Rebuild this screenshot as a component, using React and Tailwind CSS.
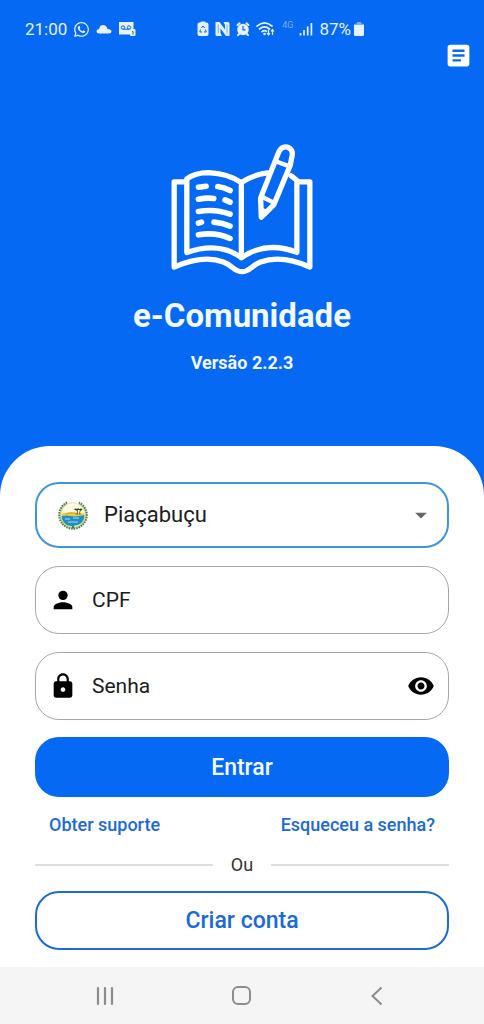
import { useState } from 'react';
import { FaWhatsapp } from 'react-icons/fa';
import { MdArrowDropDown, MdArticle, MdLock, MdVisibility, MdVisibilityOff } from 'react-icons/md';

function PersonIcon() {
  return (
    <svg width="28" height="28" viewBox="0 0 24 24" fill="currentColor" aria-hidden="true">
      <circle cx="12" cy="8" r="4" />
      <path d="M12 14c-2.670 0-8 1.340-8 4v2h16v-2c0-2.660-5.330-4-8-4z" />
    </svg>
  );
}

function CloudIcon() {
  return (
    <svg width="16" height="16" viewBox="0 0 16 16" aria-hidden="true">
      <path d="M3 12.500Q.5 12.500.5 10.300T3 8.300Q3.600 4 7 4t4.500 4q4 .2 4 2.400 0 2.100-2.500 2.100z" fill="#e6f2ff" />
    </svg>
  );
}

function VoicemailIcon() {
  return (
    <svg width="18" height="16" viewBox="0 0 18 16" aria-hidden="true">
      <path d="M1 1h14.500v7h-3.500v5.500H1z" fill="#e6f2ff" />
      <g fill="none" stroke="#0569f4" strokeWidth="1">
        <circle cx="5" cy="6.500" r="1.700" />
        <circle cx="11" cy="6.500" r="1.700" />
        <path d="M5 8.200h6" />
      </g>
      <rect x="12" y="8" width="5.500" height="7" rx="1" fill="#e6f2ff" />
      <path d="M14 10.500h1v3" fill="none" stroke="#0569f4" strokeWidth="1" />
    </svg>
  );
}

function BatteryCareIcon() {
  return (
    <svg width="12" height="16" viewBox="0 0 12 16" aria-hidden="true">
      <path d="M3.500 1.500q0-1 1-1h3q1 0 1 1h1q2 0 2 2v9.500q0 2-2 2h-7q-2 0-2-2V3.500q0-2 2-2z" fill="#e6f2ff" />
      <path d="M4.300 7 6 5l1.700 2M8.500 8.500l.7 2.500H7M5 11H2.800L3.500 8.500" fill="none" stroke="#0569f4" strokeWidth="1" />
    </svg>
  );
}

function NfcIcon() {
  return (
    <svg width="15" height="16" viewBox="0 0 15 16" aria-hidden="true">
      <path d="M1 1h3.500l5.500 7.500V4L8.500 1H13q1.500 0 1.500 1.500V15h-3.500L5.500 7.500V12L7 15H2Q.5 15 .5 13.500V1z" fill="#e6f2ff" />
      <path d="M3.300 3.500v9M12 3.500v9" stroke="#0569f4" strokeWidth=".5" />
    </svg>
  );
}

function AlarmIcon() {
  return (
    <svg width="14" height="16" viewBox="0 0 14 16" aria-hidden="true">
      <circle cx="7" cy="8.500" r="5.800" fill="#e6f2ff" />
      <path d="M1.500 4 3.600 2.300M12.500 4 10.400 2.300M3 13l-1 1.200M11 13l1 1.200" stroke="#e6f2ff" strokeWidth="2" strokeLinecap="round" />
      <path d="M7 5v3.800h2.600" fill="none" stroke="#0569f4" strokeWidth="1.200" />
    </svg>
  );
}

function WifiIcon() {
  return (
    <svg width="20" height="16" viewBox="0 0 20 16" aria-hidden="true">
      <g fill="none" stroke="#e6f2ff" strokeWidth="1.700" strokeLinecap="round">
        <path d="M1 5.200Q8.500-1.500 16 5.200" />
        <path d="M3.500 8Q8.500 3.600 13.500 8" />
        <path d="M6 10.700q2.500-2 4.500-.4" />
      </g>
      <circle cx="8.500" cy="13" r="1.300" fill="#e6f2ff" />
      <path d="M12.500 8.500v5M11 12l1.500 2 1.500-2M16.500 14V9M15 10.500l1.500-2 1.500 2" fill="none" stroke="#e6f2ff" strokeWidth="1.200" />
    </svg>
  );
}

function SignalIcon() {
  return (
    <svg width="14" height="16" viewBox="0 0 14 16" aria-hidden="true">
      <path d="M1.500 12v2.500M5 9v5.500M8.700 5.500v9M12.400 2v12.500" stroke="#e6f2ff" strokeWidth="1.700" />
    </svg>
  );
}

function BatteryIcon() {
  return (
    <svg width="10" height="16" viewBox="0 0 10 16" aria-hidden="true">
      <path d="M3 1h4v1.500h1.500Q10 2.500 10 4H0q0-1.500 1.500-1.500H3z" fill="#78aff8" />
      <path d="M0 4h10v9.500q0 1.500-1.500 1.500h-7Q0 15 0 13.500z" fill="#e6f2ff" />
    </svg>
  );
}

function StatusBar() {
  return (
    <div className="flex h-[39px] items-end justify-between pr-[120px] pl-[25px] text-[#e6f2ff]">
      <div className="flex h-5 items-center gap-[6px]">
        <span className="text-[17px] leading-5">21:00</span>
        <FaWhatsapp size={17} />
        <CloudIcon />
        <VoicemailIcon />
      </div>
      <div className="flex h-5 items-center gap-[6px]">
        <BatteryCareIcon />
        <NfcIcon />
        <AlarmIcon />
        <WifiIcon />
        <span className="self-start text-[9px] leading-3 text-[#78aff8]">4G</span>
        <SignalIcon />
        <span className="flex items-center gap-[3px] text-[17px] leading-5">
          87%
          <BatteryIcon />
        </span>
      </div>
    </div>
  );
}

function BookLogo() {
  return (
    <svg width="145" height="133" viewBox="30 25 435 400" fill="none" stroke="#fff" strokeWidth="16" strokeLinecap="round" strokeLinejoin="round" aria-hidden="true">
      <path d="M78 142H42V398Q130 360 190 383C218 393 222 412 246 412S274 393 302 383Q365 360 450 398V142H413" />
      <path d="M244 370Q178 320 80 354V133Q105 114 145 114 205 117 244 144 278 121 322 115M244 147V370Q320 318 411 354V137L394 124" />
      <path d="M115 158 138 155M173 156Q192 158 210 168M115 194Q140 189 161 192M195 196 210 203M115 231Q165 222 210 239M115 266 124 263M162 263Q188 265 210 275M115 301Q168 292 210 312" strokeWidth="17" />
      <path d="M357 51Q366 34 382 37 400 44 397 62L391 92 342 210 304 248 302 190z" />
      <path d="M347 80 391 96M304 186 343 205" strokeWidth="13" />
      <path d="M304 222V248L324 228z" fill="#fff" strokeWidth="4" />
    </svg>
  );
}

function CitySeal() {
  return (
    <svg width="32" height="32" viewBox="0 0 32 32" aria-hidden="true">
      <circle cx="16" cy="16" r="12" fill="#fbfae5" />
      <path d="M4.500 14.500q11-2 23 0v3h-23z" fill="#f2ce3c" />
      <path d="M4.500 17q5-1 10 0t13-1q0 10-11.500 11T4.500 17z" fill="#218fc4" />
      <path d="M8 20h5m3-1h6M11 23h10" stroke="#a4dff1" strokeWidth="1" />
      <path d="M9 15q5-2 12 0" stroke="#dca829" strokeWidth="1.500" fill="none" />
      <path d="M20 16q1-3 0-6m3 6q-1-3 .5-5" stroke="#69522a" strokeWidth=".9" fill="none" />
      <path d="M17 10.500q1.500-2 3-.3 1-2 2.500 0 2-1.500 3 .8l-2 .5-2-.7-1.500 1z" fill="#24402b" />
      <path d="M10.500 4.500A12.700 12.700 0 1 0 21.500 4.500" fill="none" stroke="#cfdc8a" strokeWidth="2" />
      <path d="M10 3.500A13.800 13.800 0 1 0 22 3.500" fill="none" stroke="#4b7453" strokeWidth="2" strokeDasharray="1.500 1" />
      <path d="m14.500 28 1.500-2 1.500 2-1.500 2z" fill="#398449" />
      <path d="M12 4.500q4-2 8 0" stroke="#dfe6a8" fill="none" strokeWidth="1" />
    </svg>
  );
}

const fieldClass =
  'flex h-[68px] items-center rounded-3xl border border-[#a6a6a6] px-[13px] text-black focus-within:border-[#2f8fdc]';
const inputClass =
  'min-w-0 flex-1 bg-transparent pl-[15px] text-[21px] leading-7 text-[#1c1c1c] outline-none placeholder:text-[#1c1c1c] placeholder:opacity-100';

function LoginForm() {
  const [visible, setVisible] = useState(false);

  return (
    <form className="flex flex-1 flex-col px-[35px] pt-9 pb-[17px]" onSubmit={(e) => e.preventDefault()}>
      <div className="flex h-[66px] items-center rounded-3xl border-2 border-[#3d96dc] pl-5">
        <CitySeal />
        <div className="grid h-full min-w-0 flex-1 items-center">
          <select
            aria-label="Município"
            className="col-start-1 row-start-1 h-full w-full appearance-none bg-transparent pb-[2px] pl-[15px] text-[22px] text-[#1c1c1c] outline-none"
          >
            <option>Piaçabuçu</option>
          </select>
          <MdArrowDropDown size={28} className="pointer-events-none col-start-1 row-start-1 mr-3 justify-self-end text-[#666]" />
        </div>
      </div>

      <div className={`${fieldClass} mt-[18px]`}>
        <PersonIcon />
        <input aria-label="CPF" placeholder="CPF" inputMode="numeric" className={inputClass} />
      </div>

      <div className={`${fieldClass} mt-[18px]`}>
        <MdLock size={28} />
        <input aria-label="Senha" placeholder="Senha" type={visible ? 'text' : 'password'} className={inputClass} />
        <button type="button" aria-label="Mostrar senha" onClick={() => setVisible(!visible)}>
          {visible ? <MdVisibilityOff size={28} /> : <MdVisibility size={28} />}
        </button>
      </div>

      <button type="submit" className="mt-[17px] h-[60px] rounded-3xl bg-[#0569f4] pt-[2px] text-[23px] font-medium text-[#f2f8ff]">
        Entrar
      </button>

      <div className="mt-4 flex justify-between px-[14px] text-[18px] leading-6 font-medium text-[#1b6ad6]">
        <a href="#suporte">Obter suporte</a>
        <a href="#senha">Esqueceu a senha?</a>
      </div>

      <div className="mt-4 flex items-center gap-[18px] text-[18px] leading-6 text-[#333]">
        <span className="h-[2px] flex-1 bg-[#dedede]" />
        Ou
        <span className="h-[2px] flex-1 bg-[#dedede]" />
      </div>

      <button type="button" className="mt-[14px] h-[59px] rounded-3xl border-2 border-[#1b6ad6] pt-[2px] text-[23px] font-medium text-[#1b6ad6]">
        Criar conta
      </button>
    </form>
  );
}

function NavigationBar() {
  return (
    <nav className="grid h-[57px] grid-cols-3 items-center bg-[#f5f5f5] px-9 text-[#8c8c8c]">
      <button type="button" aria-label="Recentes" className="justify-self-center">
        <svg width="20" height="20" viewBox="0 0 20 20" stroke="currentColor" strokeWidth="2.200" strokeLinecap="round">
          <path d="M3 2v16M10 2v16M17 2v16" />
        </svg>
      </button>
      <button type="button" aria-label="Início" className="justify-self-center">
        <svg width="20" height="20" viewBox="0 0 20 20" fill="none" stroke="currentColor" strokeWidth="2">
          <rect x="1" y="1" width="17" height="17" rx="5" />
        </svg>
      </button>
      <button type="button" aria-label="Voltar" className="justify-self-center">
        <svg width="20" height="20" viewBox="0 0 20 20" fill="none" stroke="currentColor" strokeWidth="2">
          <path d="m12.500 1.500-9 8.500 9 8.500" />
        </svg>
      </button>
    </nav>
  );
}

export default function App() {
  return (
    <div className="flex min-h-screen flex-col bg-[#0569f4] font-[Roboto,sans-serif]">
      <StatusBar />
      <header className="flex h-[407px] flex-col items-center text-[#f2f8ff]">
        <button type="button" aria-label="Notícias" className="mt-[2px] mr-[11px] self-end text-white">
          <MdArticle size={29} />
        </button>
        <div className="mt-[73px]">
          <BookLogo />
        </div>
        <h1 className="mt-5 text-[33px] leading-10 font-bold">e-Comunidade</h1>
        <p className="mt-[15px] text-[18px] leading-6 font-bold">Versão 2.2.3</p>
      </header>
      <main className="flex flex-1 flex-col rounded-t-[50px] bg-white">
        <LoginForm />
      </main>
      <NavigationBar />
    </div>
  );
}
